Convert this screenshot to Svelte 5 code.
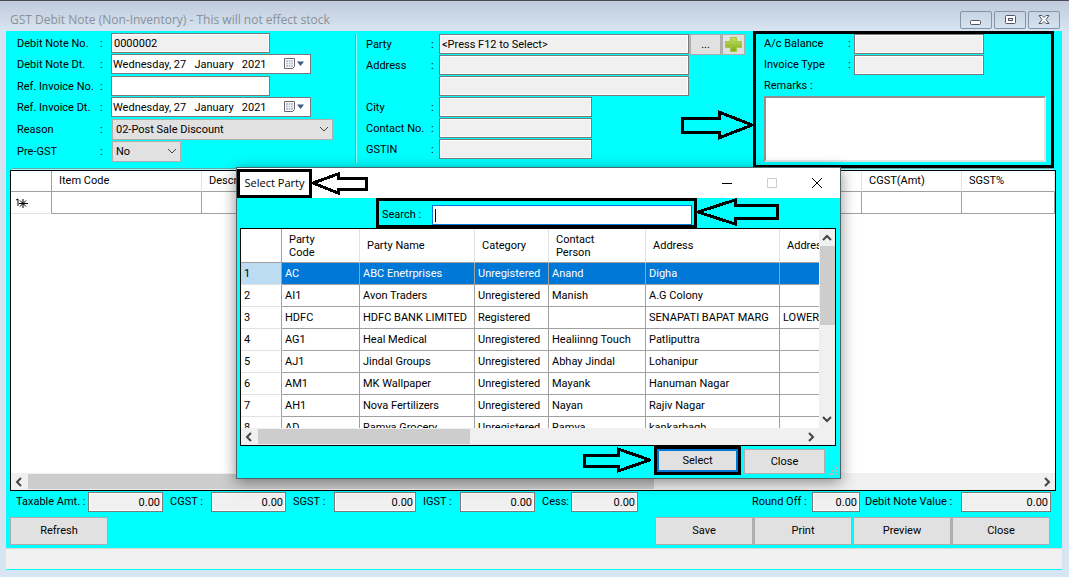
<script lang="ts">
	const parties = [
		['AC', 'ABC Enetrprises', 'Unregistered', 'Anand', 'Digha', ''],
		['AI1', 'Avon Traders', 'Unregistered', 'Manish', 'A.G Colony', ''],
		['HDFC', 'HDFC BANK LIMITED', 'Registered', '', 'SENAPATI BAPAT MARG', 'LOWER PAREL'],
		['AG1', 'Heal Medical', 'Unregistered', 'Healiinng Touch', 'Patliputtra', ''],
		['AJ1', 'Jindal Groups', 'Unregistered', 'Abhay Jindal', 'Lohanipur', ''],
		['AM1', 'MK Wallpaper', 'Unregistered', 'Mayank', 'Hanuman Nagar', ''],
		['AH1', 'Nova Fertilizers', 'Unregistered', 'Nayan', 'Rajiv Nagar', ''],
		['AD', 'Ramya Grocery', 'Unregistered', 'Ramya', 'kankarbagh', '']
	];
	const today = 'Wednesday, 27   January   2021';

	let selected = $state(0);
	let search = $state('');
</script>

{#snippet chevron(dir: string)}
	<svg class={['chevron', dir]} viewBox="0 0 10 10" aria-hidden="true">
		<path d="M1 3l4 4 4-4" fill="none" stroke="currentColor" />
	</svg>
{/snippet}

{#snippet dateBox(id: string)}
	<div class="date">
		<input {id} value={today} />
		<button aria-label="Open calendar">
			<svg width="22" height="14" viewBox="0 0 22 14">
				<path d="M1.5 1.5h10v8l-2 2h-8z" fill="#fff" stroke="#6d6470" />
				<path d="M3 3h7v7H3z" fill="#b9c3d4" />
				<path d="M3 5.5h7M3 7.5h7M5.5 3v7M7.5 3v7" stroke="#fff" stroke-width=".6" />
				<path d="M14 4.500h7L17.500 9z" fill="#3c5a86" />
			</svg>
		</button>
	</div>
{/snippet}

<div class="window">
	<header class="titlebar">
		<h1>GST Debit Note (Non-Inventory) - This will not effect stock</h1>
		<div class="controls">
			<button aria-label="Minimize">
				<svg width="14" height="14"><rect x="1.500" y="7.500" width="10" height="4" rx="1" fill="#fff" stroke="#535666" /></svg>
			</button>
			<button aria-label="Restore">
				<svg width="14" height="14"><rect x="2.500" y="2.500" width="10" height="8" rx="1" fill="#fff" stroke="#535666" /><rect x="5.500" y="5.500" width="4" height="2" fill="#d7e4f2" stroke="#535666" /></svg>
			</button>
			<button aria-label="Close window">
				<svg width="14" height="14"><path d="M2 2.500h3l2 2 2-2h3L9 6.500l3 4H9l-2-2-2 2H2l3-4z" fill="#fff" stroke="#535666" /></svg>
			</button>
		</div>
	</header>

	<main>
		<form class="entry" onsubmit={(e) => e.preventDefault()}>
			<div class="group note">
				<label for="note-no">Debit Note No.</label><i>:</i>
				<input id="note-no" class="w-code grey" value="0000002" readonly />
				<label for="note-dt">Debit Note Dt.</label><i>:</i>
				{@render dateBox('note-dt')}
				<label for="ref-no">Ref. Invoice No.</label><i>:</i>
				<input id="ref-no" class="w-code" />
				<label for="ref-dt">Ref. Invoice Dt.</label><i>:</i>
				{@render dateBox('ref-dt')}
				<label for="reason">Reason</label><i>:</i>
				<div class="combo reason">
					<select id="reason"><option>02-Post Sale Discount</option></select>
					{@render chevron('down')}
				</div>
				<label for="pre-gst">Pre-GST</label><i>:</i>
				<div class="combo pre">
					<select id="pre-gst"><option>No</option><option>Yes</option></select>
					{@render chevron('down')}
				</div>
			</div>

			<div class="group party">
				<label for="party">Party</label><i>:</i>
				<div class="picker">
					<input id="party" class="grey w-long" value="<Press F12 to Select>" readonly />
					<button class="more" aria-label="Browse parties">...</button>
					<button class="add" aria-label="Add party">
						<svg width="17" height="17" viewBox="0 0 17 17">
							<defs>
								<linearGradient id="leaf" x2="0" y2="1">
									<stop offset="0" stop-color="#c6dd6c" />
									<stop offset="1" stop-color="#7fae12" />
								</linearGradient>
							</defs>
							<path d="M5.500 1.500h6v4h5v6h-5v4h-6v-4h-5v-6h5z" fill="url(#leaf)" stroke="#a4c83c" />
						</svg>
					</button>
				</div>
				<label for="address1">Address</label><i>:</i>
				<input id="address1" class="grey w-long" readonly />
				<span></span><i></i>
				<input class="grey w-long" aria-label="Address line 2" readonly />
				<label for="city">City</label><i>:</i>
				<input id="city" class="grey w-short" readonly />
				<label for="contact">Contact No.</label><i>:</i>
				<input id="contact" class="grey w-short" readonly />
				<label for="gstin">GSTIN</label><i>:</i>
				<input id="gstin" class="grey w-short" readonly />
			</div>

			<div class="extra">
				<svg class="arrow to-extra" width="74" height="32" aria-hidden="true">
					<path d="M2 9h37V3l33 13-33 13v-6H2z" />
				</svg>
				<div class="balance">
					<label for="balance">A/c Balance</label><i>:</i>
					<input id="balance" class="grey" readonly />
					<label for="inv-type">Invoice Type</label><i>:</i>
					<input id="inv-type" class="grey" readonly />
				</div>
				<label class="remarks" for="remarks">Remarks :</label>
				<textarea id="remarks"></textarea>
			</div>
		</form>

		<section class="items">
			<table>
				<colgroup>
					<col class="c-row" /><col class="c-code" /><col class="c-desc" />
					<col class="c-tax" /><col class="c-tax" /><col />
				</colgroup>
				<thead>
					<tr><th></th><th>Item Code</th><th>Description</th><th></th><th>CGST(Amt)</th><th>SGST%</th></tr>
				</thead>
				<tbody>
					<tr>
						<th>
							<svg width="14" height="12" viewBox="0 0 14 12" aria-label="New row">
								<path d="M1 3l2-1v7M8 2v9M4 6.500h9M5 3.500l6 6M11 3.500l-6 6" fill="none" stroke="#000" />
							</svg>
						</th>
						<td></td><td></td><td></td><td></td><td></td>
					</tr>
				</tbody>
			</table>
			<div class="hbar" aria-hidden="true">
				{@render chevron('left')}
				<div class="track"><div class="thumb wide"></div></div>
				{@render chevron('right')}
			</div>
		</section>

		<div class="totals">
			<label for="taxable" class="l-taxable">Taxable Amt. :</label>
			<input id="taxable" class="grey n-75" value="0.00" readonly />
			<label for="cgst">CGST :</label>
			<input id="cgst" class="grey n-75" value="0.00" readonly />
			<label for="sgst">SGST :</label>
			<input id="sgst" class="grey n-82" value="0.00" readonly />
			<label for="igst" class="l-igst">IGST :</label>
			<input id="igst" class="grey n-75" value="0.00" readonly />
			<label for="cess" class="l-cess">Cess:</label>
			<input id="cess" class="grey n-67" value="0.00" readonly />
			<label for="round" class="l-round">Round Off :</label>
			<input id="round" class="grey n-48" value="0.00" readonly />
			<label for="value" class="l-value">Debit Note Value :</label>
			<input id="value" class="grey n-90" value="0.00" readonly />
		</div>

		<div class="actions">
			<button class="btn">Refresh</button>
			<span class="spacer"></span>
			<button class="btn">Save</button>
			<button class="btn">Print</button>
			<button class="btn">Preview</button>
			<button class="btn">Close</button>
		</div>
		<footer></footer>
	</main>

	<div class="dialog" role="dialog" aria-labelledby="dialog-title">
		<div class="dialog-bar">
			<h2 id="dialog-title">Select Party</h2>
			<svg class="arrow" width="60" height="24" aria-hidden="true">
				<path d="M1 12L26 3v4h28v11H26v4z" />
			</svg>
			<span class="spacer"></span>
			<button aria-label="Minimize dialog"><svg width="12" height="12"><path d="M1 6.500h10" stroke="#000" /></svg></button>
			<button aria-label="Maximize dialog" disabled><svg width="12" height="12"><path d="M1.500 1.500h9v9h-9z" fill="none" stroke="#ccc" /></svg></button>
			<button aria-label="Close dialog"><svg width="12" height="12"><path d="M1 1l10 10M11 1L1 11" stroke="#000" /></svg></button>
		</div>

		<div class="search-row">
			<div class="search">
				<label for="search">Search :</label>
				<div class="search-box">
					<span class="caret"></span>
					<input id="search" bind:value={search} />
				</div>
			</div>
			<svg class="arrow" width="84" height="30" aria-hidden="true">
				<path d="M1 14L38 2v5h42v13H38v6z" />
			</svg>
		</div>

		<div class="list">
			<div class="viewport">
				<table>
					<colgroup>
						<col class="p-row" /><col class="p-code" /><col class="p-name" /><col class="p-cat" />
						<col class="p-person" /><col class="p-addr" /><col class="p-addr2" />
					</colgroup>
					<thead>
						<tr>
							<th></th><th>Party<br />Code</th><th>Party Name</th><th>Category</th>
							<th>Contact<br />Person</th><th>Address</th><th>Address2</th>
						</tr>
					</thead>
					<tbody>
						{#each parties as party, i}
							<tr class={{ selected: i === selected }} onclick={() => (selected = i)}>
								<th>{i + 1}</th>
								{#each party as cell}
									<td>{cell}</td>
								{/each}
							</tr>
						{/each}
					</tbody>
				</table>
			</div>
			<div class="vbar" aria-hidden="true">
				{@render chevron('up')}
				<div class="track"><div class="thumb"></div></div>
				{@render chevron('down')}
			</div>
			<div class="hbar" aria-hidden="true">
				{@render chevron('left')}
				<div class="track"><div class="thumb"></div></div>
				{@render chevron('right')}
			</div>
		</div>

		<div class="dialog-actions">
			<svg class="arrow" width="70" height="28" aria-hidden="true">
				<path d="M3 9h34V3l32 11-32 11v-5H3z" />
			</svg>
			<div class="marked"><button class="btn default">Select</button></div>
			<button class="btn">Close</button>
			<svg class="grip" width="9" height="9" aria-hidden="true">
				<path d="M6 0h2v2h-2zM6 3h2v2h-2zM3 3h2v2h-2zM6 6h2v2h-2zM3 6h2v2h-2zM0 6h2v2h-2z" fill="#b8b8b8" />
			</svg>
		</div>
	</div>
</div>

<style>
	:global(body) {
		background: #d7e4f2;
		color: #000;
		font: 11px/14px Roboto, 'Liberation Sans', sans-serif;
	}

	* {
		box-sizing: border-box;
	}

	i {
		font-style: normal;
	}

	input,
	select,
	textarea,
	button {
		margin: 0;
		border-radius: 0;
		color: inherit;
		font: inherit;
	}

	input {
		height: 20px;
		padding: 0 2px;
		border: 1px solid #7a7a7a;
		background: #fff;
		outline: none;
		min-width: 0;
		&.grey {
			background: #f0f0f0;
			box-shadow: inset 0 0 0 1px #fff;
		}
	}

	.window {
		position: relative;
		display: flex;
		flex-direction: column;
		min-height: 100vh;
		padding: 0 7px 7px 6px;
		border-top: 1px solid #4a4a52;
		background: #d7e4f2;
	}

	.titlebar {
		display: flex;
		align-items: center;
		justify-content: space-between;
		height: 30px;
		margin: 0 -7px 0 -6px;
		padding: 7px 9px 0 10px;
		background: linear-gradient(#bfcbda, #d7e4f2);
	}

	h1 {
		margin: 0;
		color: #8b9097;
		font: 12px/18px 'Open Sans', 'Noto Sans', sans-serif;
	}

	.controls {
		display: flex;
		gap: 2px;
		& button {
			display: grid;
			place-items: center;
			width: 32px;
			height: 18px;
			padding: 0;
			border: 1px solid #8493a8;
			border-radius: 2px;
			background: transparent;
		}
	}

	main {
		flex: 1;
		display: flex;
		flex-direction: column;
		border-bottom: 1px solid #0ff;
		background: #0ff;
	}

	.entry {
		display: flex;
		height: 139px;
		margin: 0 8px 0 6px;
		border-bottom: 2px groove #9ff;
	}

	.group {
		display: grid;
		align-items: start;
		& label,
		& i {
			line-height: 22px;
		}
	}

	.note {
		flex: none;
		width: 343px;
		grid-template: 21px 22px 21px 22px 22px 21px / 83px 11px 1fr;
		align-content: start;
		padding: 2px 0 0 5px;
	}

	.party {
		flex: 1;
		grid-template-columns: 65px 8px 1fr;
		grid-auto-rows: 21px;
		align-content: start;
		margin: 3px 0 5px;
		padding-left: 9px;
		border-left: 2px groove #9ff;
	}

	.w-code {
		width: 159px;
	}
	.w-long {
		width: 250px;
	}
	.w-short {
		width: 153px;
	}

	.date {
		display: flex;
		width: 200px;
		height: 20px;
		border: 1px solid #7a7a7a;
		background: #fff;
		& input {
			flex: 1;
			height: 18px;
			padding: 0 1px;
			border: 0;
			white-space: pre;
		}
		& button {
			display: grid;
			place-items: center;
			width: 32px;
			padding: 0;
			border: 0;
			background: none;
		}
	}

	.combo {
		position: relative;
		height: 20px;
		margin-left: 1px;
		& select {
			width: 100%;
			height: 21px;
			padding: 1px 3px 0;
			border: 1px solid #adadad;
			background: #e1e1e1;
			appearance: none;
		}
		& .chevron {
			position: absolute;
			top: 5px;
			right: 4px;
			pointer-events: none;
		}
	}

	.reason {
		width: 221px;
	}
	.pre {
		width: 69px;
	}

	.chevron {
		flex: none;
		width: 10px;
		height: 10px;
		color: #444;
		&.left {
			rotate: 90deg;
		}
		&.right {
			rotate: -90deg;
		}
		&.up {
			rotate: 180deg;
		}
	}

	.picker {
		display: flex;
		gap: 1px;
		& button {
			display: grid;
			place-items: center;
			height: 21px;
			padding: 0;
			border: 1px solid #adadad;
			background: #e1e1e1;
		}
		& .more {
			width: 31px;
		}
		& .add {
			width: 23px;
		}
	}

	.extra {
		position: relative;
		flex: none;
		display: flex;
		flex-direction: column;
		width: 301px;
		height: 137px;
		padding: 0 5px 3px 8px;
		border: 3px solid #000;
		& textarea {
			flex: 1;
			border: 2px inset #e3e3e3;
			background: #fff;
			resize: none;
			outline: none;
		}
	}

	.balance {
		display: grid;
		grid-template: 21px 21px / 84px 6px 130px;
		line-height: 20px;
	}

	.remarks {
		line-height: 20px;
	}

	.arrow {
		flex: none;
		& path {
			fill: none;
			stroke: #000;
			stroke-width: 3;
			shape-rendering: crispEdges;
		}
	}

	.to-extra {
		position: absolute;
		top: 75px;
		right: 297px;
	}

	table {
		border-collapse: separate;
		border-spacing: 0;
		table-layout: fixed;
	}

	th,
	td {
		overflow: hidden;
		padding: 0 3px;
		border: solid #a0a0a0;
		border-width: 0 1px 1px 0;
		font-weight: 400;
		text-align: left;
		white-space: nowrap;
	}

	thead th {
		padding: 0 7px;
		border-right-color: #e2e2e2;
		&:first-child {
			border-right-color: #a0a0a0;
		}
	}

	tbody th {
		border-bottom-color: #e2e2e2;
	}

	.items {
		flex: 1;
		display: flex;
		flex-direction: column;
		justify-content: space-between;
		margin: 0 6px 0 4px;
		border: 1px solid #000;
		background: #fff;
		& table {
			width: 100%;
		}
		& thead tr {
			height: 21px;
		}
		& tbody tr {
			height: 22px;
		}
		& tbody th {
			padding: 0 4px;
		}
		& svg {
			display: block;
		}
	}

	.c-row {
		width: 41px;
	}
	.c-code {
		width: 150px;
	}
	.c-desc {
		width: 560px;
	}
	.c-tax {
		width: 100px;
	}

	.hbar {
		display: flex;
		align-items: center;
		height: 17px;
		padding: 0 3px;
		background: #f0f0f0;
		& .track {
			flex: 1;
			height: 15px;
			margin: 0 4px;
		}
	}

	.hbar,
	.vbar {
		& path {
			stroke-width: 2;
		}
	}

	.thumb {
		width: 39%;
		height: 100%;
		background: #cdcdcd;
		&.wide {
			width: 62%;
		}
	}

	.totals {
		display: flex;
		align-items: center;
		padding: 1px 11px 0 10px;
		& label {
			flex: none;
			width: 48px;
			padding-left: 7px;
			line-height: 20px;
		}
		& input {
			flex: none;
			text-align: right;
		}
		& .l-taxable {
			width: 72px;
			padding-left: 0;
		}
		& .l-igst {
			width: 44px;
		}
		& .l-cess {
			width: 36px;
		}
		& .l-round {
			width: 60px;
			margin-left: auto;
			padding-left: 0;
		}
		& .l-value {
			width: 101px;
			padding-left: 5px;
		}
	}

	.n-48 {
		width: 48px;
	}
	.n-67 {
		width: 67px;
	}
	.n-75 {
		width: 75px;
	}
	.n-82 {
		width: 82px;
	}
	.n-90 {
		width: 90px;
	}

	.actions {
		display: flex;
		gap: 1px;
		padding: 5px 12px 3px 4px;
		& .btn {
			width: 98px;
			height: 28px;
		}
	}

	.spacer {
		flex: 1;
	}

	.btn {
		border: 1px solid #adadad;
		background: #e1e1e1;
	}

	footer {
		height: 21px;
		border-top: 1px solid #d7d7d7;
		background: #f0f0f0;
	}

	.dialog {
		position: absolute;
		top: 166px;
		left: 236px;
		width: 605px;
		border: 1px solid #4f6468;
		background: #0ff;
		box-shadow: 0 3px 14px rgb(0 0 0 / 45%);
	}

	.dialog-bar {
		display: flex;
		align-items: center;
		height: 30px;
		padding-right: 1px;
		background: #fff;
		& button {
			display: grid;
			place-items: center;
			width: 45px;
			height: 28px;
			padding: 0;
			border: 0;
			background: none;
		}
	}

	h2 {
		flex: none;
		width: 75px;
		height: 29px;
		margin: 0;
		border: 3px solid #000;
		font: 11px/22px 'Open Sans', 'Noto Sans', sans-serif;
		text-align: center;
		white-space: nowrap;
	}

	.search-row {
		display: flex;
		height: 30px;
		padding-left: 139px;
	}

	.search {
		display: flex;
		width: 321px;
		padding: 4px 2px 0 3px;
		border: 3px solid #000;
		& label {
			width: 50px;
			line-height: 20px;
		}
	}

	.search-box {
		display: flex;
		flex: 1;
		align-items: center;
		height: 20px;
		padding-left: 2px;
		border: 1px solid #0078d7;
		background: #fff;
		& input {
			flex: 1;
			height: 18px;
			border: 0;
		}
	}

	.caret {
		width: 1px;
		height: 13px;
		background: #000;
	}

	.list {
		display: grid;
		grid-template: 199px 17px / 1fr 16px;
		margin: 0 4px 0 3px;
		border: 1px solid #000;
		background: #f0f0f0;
		& .hbar {
			grid-column: 1;
		}
	}

	.viewport {
		overflow: hidden;
		background: #fff;
		& table {
			width: 680px;
		}
		& thead tr {
			height: 34px;
			line-height: 13px;
		}
		& tbody tr {
			height: 22px;
		}
	}

	.selected {
		& td {
			background: #0078d7;
			color: #fff;
		}
		& th {
			background: #bcdcf4;
		}
	}

	.p-row {
		width: 41px;
	}
	.p-code {
		width: 78px;
	}
	.p-name {
		width: 115px;
	}
	.p-cat {
		width: 74px;
	}
	.p-person {
		width: 97px;
	}
	.p-addr {
		width: 134px;
	}

	.vbar {
		display: flex;
		flex-direction: column;
		align-items: center;
		padding: 4px 0;
		& .track {
			flex: 1;
			width: 15px;
			margin: 3px 0;
		}
		& .thumb {
			width: 100%;
			height: 48%;
		}
	}

	.dialog-actions {
		position: relative;
		display: flex;
		justify-content: flex-end;
		gap: 3px;
		height: 32px;
		padding-right: 15px;
		& .btn {
			width: 81px;
			height: 25px;
			margin-top: 3px;
		}
		& .marked {
			width: 87px;
			height: 29px;
			border: 3px solid #000;
		}
		& .default {
			width: 81px;
			height: 23px;
			margin: 0;
			border: 2px solid #0078d7;
		}
	}

	.grip {
		position: absolute;
		right: 2px;
		bottom: 2px;
	}
</style>
